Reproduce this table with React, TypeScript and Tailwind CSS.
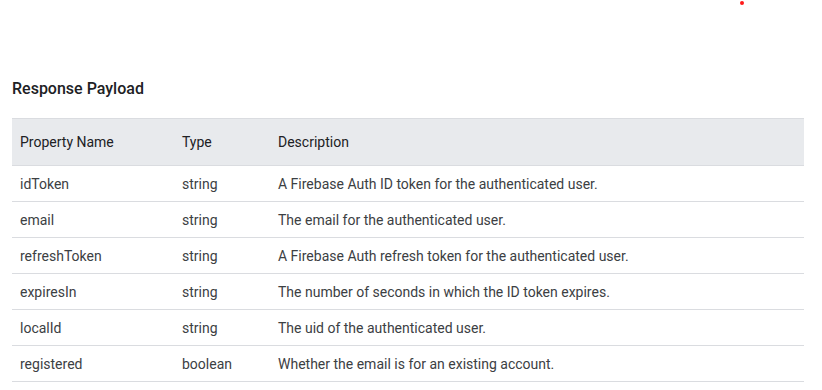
import React from "react";

const rows = [
  ["idToken", "string", "A Firebase Auth ID token for the authenticated user."],
  ["email", "string", "The email for the authenticated user."],
  ["refreshToken", "string", "A Firebase Auth refresh token for the authenticated user."],
  ["expiresIn", "string", "The number of seconds in which the ID token expires."],
  ["localId", "string", "The uid of the authenticated user."],
  ["registered", "boolean", "Whether the email is for an existing account."],
];

export default function App() {
  return (
    <div
      className="relative w-[822px] h-[390px] bg-white text-[#202124] overflow-hidden"
      style={{ fontFamily: "Roboto, 'Liberation Sans', sans-serif" }}
    >
      <div className="absolute left-[740px] top-[1px] w-[4px] h-[4px] bg-[#ff1a1a] rounded-full" />
      <div className="pt-[79px] px-3">
        <h3 className="text-[16px] leading-[20px] font-medium mb-[19px]">Response Payload</h3>
        <table className="w-[792px] border-collapse text-[14px] leading-[20px] text-[#3c4043]">
          <thead>
            <tr className="bg-[#e8eaed] border-t border-b border-[#dadce0]">
              <th className="w-[162px] h-[47px] px-2 text-left font-normal text-[#202124]">Property Name</th>
              <th className="w-[96px] px-2 text-left font-normal text-[#202124]">Type</th>
              <th className="px-2 text-left font-normal text-[#202124]">Description</th>
            </tr>
          </thead>
          <tbody>
            {rows.map((r) => (
              <tr key={r[0]} className="border-b border-[#dadce0]">
                <td className="h-[36px] px-2">{r[0]}</td>
                <td className="px-2">{r[1]}</td>
                <td className="px-2">{r[2]}</td>
              </tr>
            ))}
          </tbody>
        </table>
      </div>
    </div>
  );
}
